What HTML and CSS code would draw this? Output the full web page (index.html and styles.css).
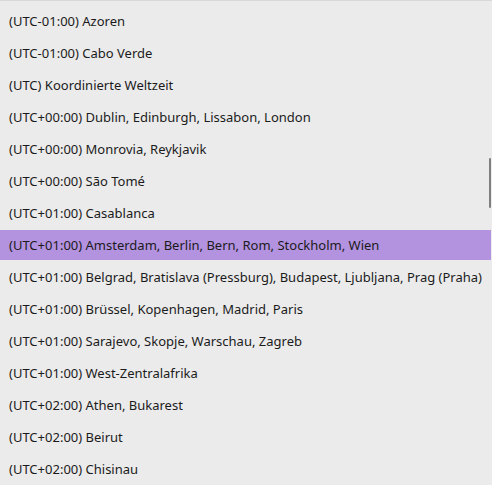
FILE: index.html
```html
<!DOCTYPE html>
<html>
<head>
<meta charset="utf-8">
<link rel="stylesheet" href="styles.css">
</head>
<body>
<div class="panel">
  <ul class="list">
    <li class="item"><span class="label">(UTC-01:00) Azoren</span></li>
    <li class="item"><span class="label">(UTC-01:00) Cabo Verde</span></li>
    <li class="item"><span class="label">(UTC) Koordinierte Weltzeit</span></li>
    <li class="item"><span class="label">(UTC+00:00) Dublin, Edinburgh, Lissabon, London</span></li>
    <li class="item"><span class="label">(UTC+00:00) Monrovia, Reykjavik</span></li>
    <li class="item"><span class="label">(UTC+00:00) São Tomé</span></li>
    <li class="item"><span class="label">(UTC+01:00) Casablanca</span></li>
    <li class="item selected"><span class="label">(UTC+01:00) Amsterdam, Berlin, Bern, Rom, Stockholm, Wien</span></li>
    <li class="item"><span class="label">(UTC+01:00) Belgrad, Bratislava (Pressburg), Budapest, Ljubljana, Prag (Praha)</span></li>
    <li class="item"><span class="label">(UTC+01:00) Brüssel, Kopenhagen, Madrid, Paris</span></li>
    <li class="item"><span class="label">(UTC+01:00) Sarajevo, Skopje, Warschau, Zagreb</span></li>
    <li class="item"><span class="label">(UTC+01:00) West-Zentralafrika</span></li>
    <li class="item"><span class="label">(UTC+02:00) Athen, Bukarest</span></li>
    <li class="item"><span class="label">(UTC+02:00) Beirut</span></li>
    <li class="item"><span class="label">(UTC+02:00) Chisinau</span></li>
  </ul>
  <div class="scrollbar"></div>
</div>
</body>
</html>
```
FILE: styles.css
```css
html, body {
  margin: 0;
  padding: 0;
}
body {
  background: #ebebeb;
  width: 492px;
  height: 485px;
  overflow: hidden;
  font-family: "Noto Sans", "Open Sans", sans-serif;
  font-size: 13px;
  color: #1b1b1b;
}
.panel {
  position: relative;
  height: 485px;
  box-sizing: border-box;
  border-top: 1px solid #d8d8d8;
  padding-top: 4px;
}
.list {
  list-style: none;
  margin: 0;
  padding: 0;
}
.item {
  height: 32px;
  padding: 1px 1px 1px 0;
  box-sizing: border-box;
}
.label {
  display: flex;
  align-items: center;
  height: 30px;
  padding-left: 9px;
  white-space: nowrap;
}
.selected .label {
  background: #b392e0;
}
.scrollbar {
  position: absolute;
  left: 489px;
  top: 157px;
  width: 2px;
  height: 50px;
  background: #7f7f7f;
  border-radius: 1px;
}
```
